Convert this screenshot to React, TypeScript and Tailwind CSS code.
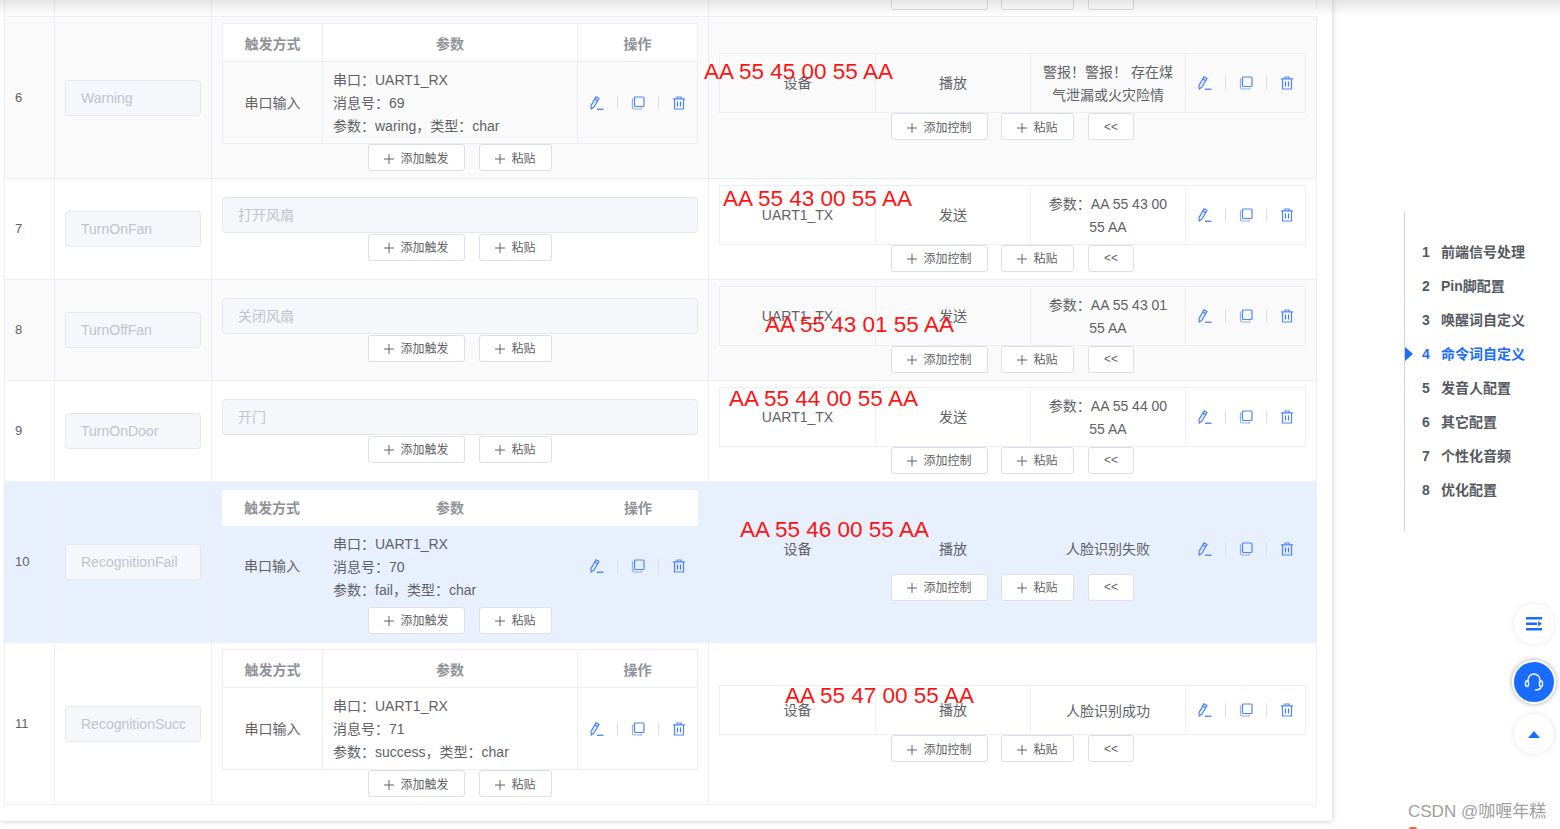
const cellLine = "border-[#ebeef5]"

type Trigger = { port: string; msg: string; arg: string }
type Control = { device: string; action: string; param: string; h: string; pad: string }
type Row = {
  no: number
  name: string
  height: string
  tone: string
  desc?: string
  trigger?: Trigger
  control: Control
  mark: { text: string; pos: string }
  active?: boolean
}

const rows: Row[] = [
  {
    no: 6, name: "Warning", height: "h-[162px]", tone: "bg-[#fafafa]",
    trigger: { port: "UART1_RX", msg: "69", arg: "waring，类型：char" },
    control: { device: "设备", action: "播放", param: "警报！警报！ 存在煤气泄漏或火灾险情", h: "h-[60px]", pad: "pb-[2px]" },
    mark: { text: "AA 55 45 00 55 AA", pos: "left-[-5px] top-[39px]" },
  },
  {
    no: 7, name: "TurnOnFan", height: "h-[101px]", tone: "bg-white", desc: "打开风扇",
    control: { device: "UART1_TX", action: "发送", param: "参数：AA 55 43 00 55 AA", h: "h-[60px]", pad: "pb-[2px]" },
    mark: { text: "AA 55 43 00 55 AA", pos: "left-[14px] top-[4px]" },
  },
  {
    no: 8, name: "TurnOffFan", height: "h-[101px]", tone: "bg-[#fafafa]", desc: "关闭风扇",
    control: { device: "UART1_TX", action: "发送", param: "参数：AA 55 43 01 55 AA", h: "h-[60px]", pad: "pb-[2px]" },
    mark: { text: "AA 55 43 01 55 AA", pos: "left-[56px] top-[29px]" },
  },
  {
    no: 9, name: "TurnOnDoor", height: "h-[101px]", tone: "bg-white", desc: "开门",
    control: { device: "UART1_TX", action: "发送", param: "参数：AA 55 44 00 55 AA", h: "h-[60px]", pad: "pb-[2px]" },
    mark: { text: "AA 55 44 00 55 AA", pos: "left-[20px] top-[2px]" },
  },
  {
    no: 10, name: "RecognitionFail", height: "h-[161px]", tone: "bg-[#e8effd]", active: true,
    trigger: { port: "UART1_RX", msg: "70", arg: "fail，类型：char" },
    control: { device: "设备", action: "播放", param: "人脸识别失败", h: "h-[50px]", pad: "" },
    mark: { text: "AA 55 46 00 55 AA", pos: "left-[31px] top-[32px]" },
  },
  {
    no: 11, name: "RecognitionSucc", height: "h-[162px]", tone: "bg-white",
    trigger: { port: "UART1_RX", msg: "71", arg: "success，类型：char" },
    control: { device: "设备", action: "播放", param: "人脸识别成功", h: "h-[50px]", pad: "" },
    mark: { text: "AA 55 47 00 55 AA", pos: "left-[76px] top-[37px]" },
  },
]

const navItems = ["前端信号处理", "Pin脚配置", "唤醒词自定义", "命令词自定义", "发音人配置", "其它配置", "个性化音频", "优化配置"]

function PencilIcon() {
  return (
    <svg width="14" height="14" viewBox="0 0 14 14" fill="none" stroke="#3f7bf6" strokeWidth="1.1">
      <path d="M1 9.5 6 0.8 9 2.5 4 11.2 1.2 13Z" fill="#dfe8fd" />
      <path d="M4.8 3 7.8 4.7" />
      <path d="M7 13.2h6.5" stroke="#1a6cff" />
    </svg>
  )
}

function CopyIcon() {
  return (
    <svg width="14" height="14" viewBox="0 0 14 14" fill="none" stroke="#4d86f7" strokeWidth="1.2">
      <path d="M2.5 3h-1v8.5A1.5 1.5 0 0 0 3 13h7.5v-1.5" stroke="#8fb0fa" />
      <rect x="3.5" y="1" width="9.5" height="9.5" rx="1" />
    </svg>
  )
}

function TrashIcon() {
  return (
    <svg width="14" height="14" viewBox="0 0 14 14" fill="none" stroke="#4d86f7" strokeWidth="1.2">
      <path d="M1 2.8h12M5 2.5V1h4v1.5" />
      <path d="M2.5 3v10h9V3" />
      <path d="M5.5 5.5v5M8.5 5.5v5" stroke="#3f7bf6" />
    </svg>
  )
}

function RowActions() {
  return (
    <div className="flex items-center justify-center gap-[13px]">
      <PencilIcon />
      <span className="h-[14px] w-px bg-[#dcdfe6]" />
      <CopyIcon />
      <span className="h-[14px] w-px bg-[#dcdfe6]" />
      <TrashIcon />
    </div>
  )
}

function SmallButton({ label, className }: { label: string; className: string }) {
  return (
    <button className={`flex h-[27px] items-center justify-center gap-[6px] rounded-[3px] border border-[#dcdfe6] bg-white pt-[2px] text-xs text-[#606266] ${className}`}>
      <svg width="10" height="10" viewBox="0 0 10 10" stroke="#606266" strokeWidth="1"><path d="M5 0v10M0 5h10" /></svg>
      {label}
    </button>
  )
}

function TriggerButtons() {
  return (
    <div className="flex justify-center gap-[14px]">
      <SmallButton label="添加触发" className="w-[97px]" />
      <SmallButton label="粘贴" className="w-[73px]" />
    </div>
  )
}

function ControlButtons() {
  return (
    <div className="flex justify-center gap-[13px]">
      <SmallButton label="添加控制" className="w-[97px]" />
      <SmallButton label="粘贴" className="w-[73px]" />
      <button className="ml-px h-[27px] w-[46px] rounded-[3px] border border-[#dcdfe6] bg-white text-xs text-[#606266]">&lt;&lt;</button>
    </div>
  )
}

function TriggerTable({ trigger, active }: { trigger: Trigger; active?: boolean }) {
  const line = active ? "border-transparent" : cellLine
  const headH = active ? "h-[36px]" : "h-[38px]"
  const shell = active ? "grid-cols-[101px_255px_120px]" : `grid-cols-[100px_255px_119px] border ${cellLine}`
  return (
    <div className={`grid w-[476px] ${shell} text-sm text-[#606266]`}>
      <div className={`flex ${headH} items-center justify-center border-r border-b bg-white pt-[2px] font-semibold text-[#909399] ${line}`}>触发方式</div>
      <div className={`flex ${headH} items-center justify-center border-r border-b bg-white pt-[2px] font-semibold text-[#909399] ${line}`}>参数</div>
      <div className={`flex ${headH} items-center justify-center border-b bg-white pt-[2px] font-semibold text-[#909399] ${line}`}>操作</div>
      <div className={`flex items-center justify-center border-r ${line}`}>串口输入</div>
      <div className={`border-r px-[10px] pt-[7px] pb-[5px] leading-[23px] ${line}`}>
        <p>串口：{trigger.port}</p>
        <p>消息号：{trigger.msg}</p>
        <p>参数：{trigger.arg}</p>
      </div>
      <div className="flex items-center justify-center"><RowActions /></div>
    </div>
  )
}

function ControlTable({ control, active }: { control: Control; active?: boolean }) {
  const line = active ? "border-transparent" : cellLine
  return (
    <div className={`grid w-[587px] grid-cols-[156px_155px_155px_119px] border ${line} ${control.h} text-sm text-[#606266]`}>
      <div className={`flex items-center justify-center border-r ${line}`}>{control.device}</div>
      <div className={`flex items-center justify-center border-r ${line}`}>{control.action}</div>
      <div className={`flex items-center justify-center border-r px-[10px] pt-[2px] text-center leading-[23px] ${line}`}>{control.param}</div>
      <div className="flex items-center justify-center"><RowActions /></div>
    </div>
  )
}

function TableRow({ row }: { row: Row }) {
  return (
    <div className={`grid grid-cols-[51px_157px_497px_608px] border-b ${cellLine} ${row.height} ${row.tone}`}>
      <div className={`flex items-center border-x pl-[10px] text-[13px] text-[#606266] ${cellLine}`}>{row.no}</div>
      <div className={`flex items-center border-r pl-[10px] ${cellLine}`}>
        <div className="flex h-[36px] w-[136px] items-center overflow-hidden rounded-[4px] border border-[#e4e7ed] bg-[#f5f7fa] pl-[15px] text-sm whitespace-nowrap text-[#c0c4cc]">{row.name}</div>
      </div>
      <div className={`flex flex-col justify-center border-r pr-[10px] pb-px pl-[10px] ${cellLine}`}>
        {row.trigger ? (
          <TriggerTable trigger={row.trigger} active={row.active} />
        ) : (
          <div className="mb-px flex h-[36px] w-[476px] items-center rounded-[4px] border border-[#e4e7ed] bg-[#f5f7fa] pl-[15px] text-sm text-[#c0c4cc]">{row.desc}</div>
        )}
        <TriggerButtons />
      </div>
      <div className={`relative flex flex-col justify-center border-r pr-[10px] pl-[10px] ${row.control.pad} ${cellLine}`}>
        <ControlTable control={row.control} active={row.active} />
        <ControlButtons />
        <span className={`absolute text-[22.5px] leading-[32px] whitespace-nowrap text-[#fb1414] ${row.mark.pos}`}>{row.mark.text}</span>
      </div>
    </div>
  )
}

function SideNav() {
  return (
    <nav className="ml-[72px] flex h-[320px] flex-col justify-center border-l border-[#d0d3d9]">
      {navItems.map((label, i) => (
        <div key={label} className={`relative flex h-[34px] items-center gap-[10px] pl-[17px] text-sm font-semibold ${i === 3 ? "text-[#1a6cff]" : "text-[#555a62]"}`}>
          {i === 3 && <span className="absolute left-0 h-0 w-0 border-y-[7.5px] border-l-[8px] border-y-transparent border-l-[#1a6cff]" />}
          <span className="w-[9px]">{i + 1}</span>
          <span>{label}</span>
        </div>
      ))}
    </nav>
  )
}

function FloatButtons() {
  return (
    <div className="absolute right-[4px] top-[604px] flex flex-col items-center">
      <button className="flex h-[40px] w-[40px] items-center justify-center rounded-full bg-white shadow-[0_0_6px_rgba(0,0,0,0.1)]">
        <svg width="16" height="14" viewBox="0 0 16 14" fill="#1a6cff">
          <path d="M0 0h16v2.5H0zM0 5.5h11V8H0zM0 11h16v2.5H0zM12 4.2l4 2.5-4 2.5z" />
        </svg>
      </button>
      <button className="mt-[16px] flex h-[44px] w-[44px] items-center justify-center rounded-full border-2 border-white bg-[#1a6cff] shadow-[0_0_5px_rgba(0,0,0,0.35)]">
        <svg width="20" height="20" viewBox="0 0 20 20" fill="none" stroke="white" strokeWidth="1.4">
          <path d="M4 10V8a6 6 0 0 1 12 0v2" />
          <rect x="1.5" y="9" width="3" height="5.5" rx="1.5" />
          <rect x="15.5" y="9" width="3" height="5.5" rx="1.5" />
          <path d="M17 14.5c0 2-2 3.5-6 3.5" />
        </svg>
      </button>
      <button className="mt-[10px] flex h-[40px] w-[40px] items-center justify-center rounded-full bg-white shadow-[0_0_6px_rgba(0,0,0,0.1)]">
        <span className="h-0 w-0 border-x-[6px] border-b-[7px] border-x-transparent border-b-[#1a6cff]" />
      </button>
    </div>
  )
}

export default function App() {
  return (
    <div className="relative flex h-[829px] w-[1560px] overflow-hidden bg-white font-['Liberation_Sans','Noto_Sans_CJK_SC',sans-serif]">
      <main className="h-[821px] w-[1332px] shrink-0 bg-white pl-[4px] shadow-[0_0_6px_rgba(0,0,0,0.22)]">
        <div className="w-[1313px]">
          {/* row cut off by the top of the page, only the button bottoms show */}
          <div className={`grid h-[17px] grid-cols-[51px_157px_497px_608px] border-b ${cellLine}`}>
            <div className={`border-x ${cellLine}`} />
            <div className={`border-r ${cellLine}`} />
            <div className={`border-r ${cellLine}`} />
            <div className={`flex h-[10px] justify-center gap-[13px] border-r pr-[10px] pl-[10px] ${cellLine}`}>
              <span className="w-[97px] rounded-b-[3px] border-x border-b border-[#dcdfe6] bg-white" />
              <span className="w-[73px] rounded-b-[3px] border-x border-b border-[#dcdfe6] bg-white" />
              <span className="ml-px w-[46px] rounded-b-[3px] border-x border-b border-[#dcdfe6] bg-white" />
            </div>
          </div>
          {rows.map((row) => (
            <TableRow key={row.no} row={row} />
          ))}
        </div>
      </main>

      <aside className="flex-1 pt-[211px]">
        <SideNav />
      </aside>

      <div className="absolute inset-x-0 top-0 h-[16px] bg-gradient-to-b from-[#0000001a] to-transparent" />
      <FloatButtons />
      <span className="absolute left-[1408px] top-[800px] text-[17px] leading-[24px] whitespace-nowrap text-[#a0a0a0]">CSDN @咖喱年糕</span>
      <span className="absolute left-[1409px] top-[827px] h-[2px] w-[8px] rounded-t-full bg-[#f4693a]" />
    </div>
  )
}
